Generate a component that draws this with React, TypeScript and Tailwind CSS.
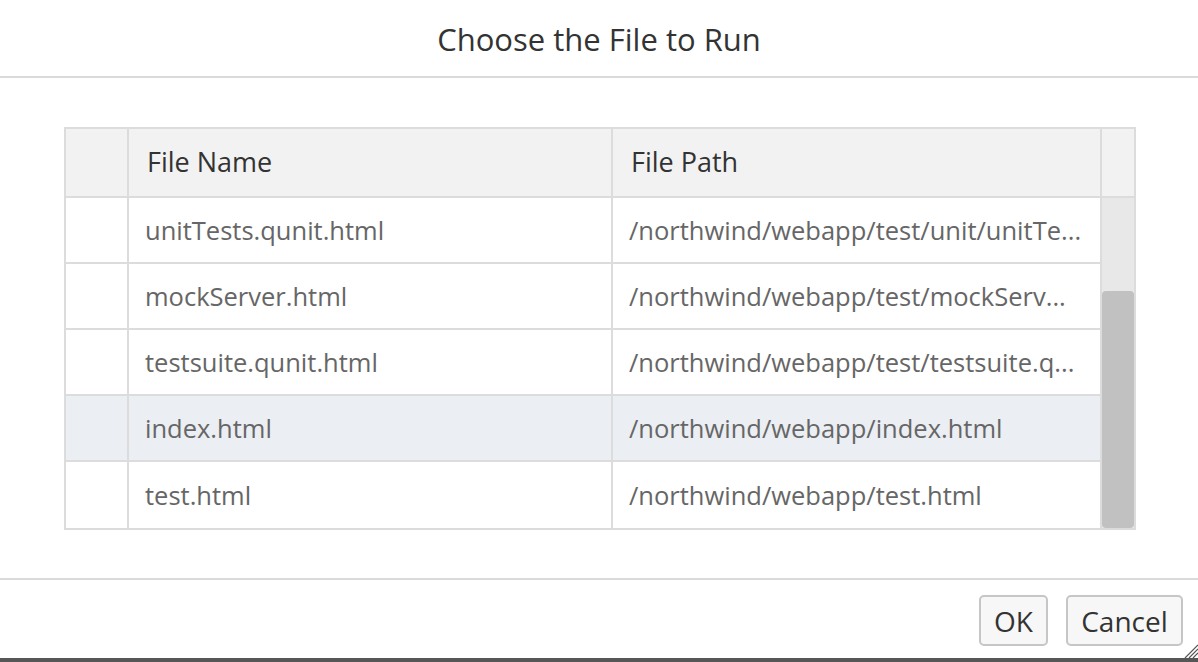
import React from "react";

const rows = [
  { name: "unitTests.qunit.html", path: "/northwind/webapp/test/unit/unitTe...", sel: false },
  { name: "mockServer.html", path: "/northwind/webapp/test/mockServ...", sel: false },
  { name: "testsuite.qunit.html", path: "/northwind/webapp/test/testsuite.q...", sel: false },
  { name: "index.html", path: "/northwind/webapp/index.html", sel: true },
  { name: "test.html", path: "/northwind/webapp/test.html", sel: false },
];

export default function App() {
  return (
    <div
      className="w-[1198px] h-[662px] bg-white flex flex-col overflow-hidden relative"
      style={{ fontFamily: '"Open Sans", "Liberation Sans", sans-serif' }}
    >
      <div className="h-[78px] flex items-center justify-center border-b-2 border-[#dadada] shrink-0">
        <span className="text-[31px] text-[#333333] pt-[3px]">Choose the File to Run</span>
      </div>
      <div className="flex-1 pt-[49px] pl-[64px] pr-[62px]">
        <div className="border-2 border-[#dcdcdc] flex">
          <div className="flex-1 min-w-0 flex flex-col">
            <div className="flex h-[69px] bg-[#f2f2f2] border-b-2 border-[#dcdcdc]">
              <div className="w-[63px] border-r-2 border-[#dcdcdc] shrink-0" />
              <div className="w-[484px] shrink-0 border-r-2 border-[#dcdcdc] flex items-center pl-[18px] text-[27px] text-[#333333]">
                File Name
              </div>
              <div className="flex-1 min-w-0 flex items-center pl-[18px] text-[27px] text-[#333333]">File Path</div>
            </div>
            {rows.map((r, i) => (
              <div
                key={r.name}
                className={`flex h-[66px] ${i < rows.length - 1 ? "border-b-2 border-[#dcdcdc]" : ""} ${
                  r.sel ? "bg-[#ebeef3]" : "bg-white"
                }`}
              >
                <div className="w-[63px] shrink-0 border-r-2 border-[#dcdcdc]" />
                <div className="w-[484px] shrink-0 border-r-2 border-[#dcdcdc] flex items-center pl-[16px] text-[25.5px] text-[#666666]">
                  {r.name}
                </div>
                <div className="flex-1 min-w-0 flex items-center pl-[16px] text-[25.5px] text-[#666666] whitespace-nowrap">
                  {r.path}
                </div>
              </div>
            ))}
          </div>
          <div className="w-[34px] shrink-0 border-l-2 border-[#dcdcdc] flex flex-col">
            <div className="h-[69px] bg-[#f2f2f2] border-b-2 border-[#dcdcdc]" />
            <div className="flex-1 bg-[#e8e8e8] flex flex-col">
              <div className="h-[93px]" />
              <div className="flex-1 bg-[#c2c1c2] rounded-[4px]" />
            </div>
          </div>
        </div>
      </div>
      <div className="h-[80px] border-t-2 border-[#dadada] flex items-start justify-end pt-[15px] pr-[15px] gap-[18px] shrink-0">
        <button className="w-[69px] h-[51px] rounded-[5px] border-2 border-[#c6c6c6] bg-[#f7f7f7] text-[28px] text-[#333333] flex items-center justify-center">
          OK
        </button>
        <button className="w-[117px] h-[51px] rounded-[5px] border-2 border-[#c6c6c6] bg-[#f7f7f7] text-[28px] text-[#333333] flex items-center justify-center">
          Cancel
        </button>
      </div>
      <div className="h-[4px] bg-[#565656] shrink-0" />
      <svg className="absolute right-0 bottom-[4px]" width="16" height="14" viewBox="0 0 16 14">
        <line x1="3" y1="14" x2="16" y2="1" stroke="#555" strokeWidth="1.2" />
        <line x1="7" y1="14" x2="16" y2="5" stroke="#555" strokeWidth="1.2" />
        <line x1="11" y1="14" x2="16" y2="9" stroke="#555" strokeWidth="1.2" />
      </svg>
    </div>
  );
}
